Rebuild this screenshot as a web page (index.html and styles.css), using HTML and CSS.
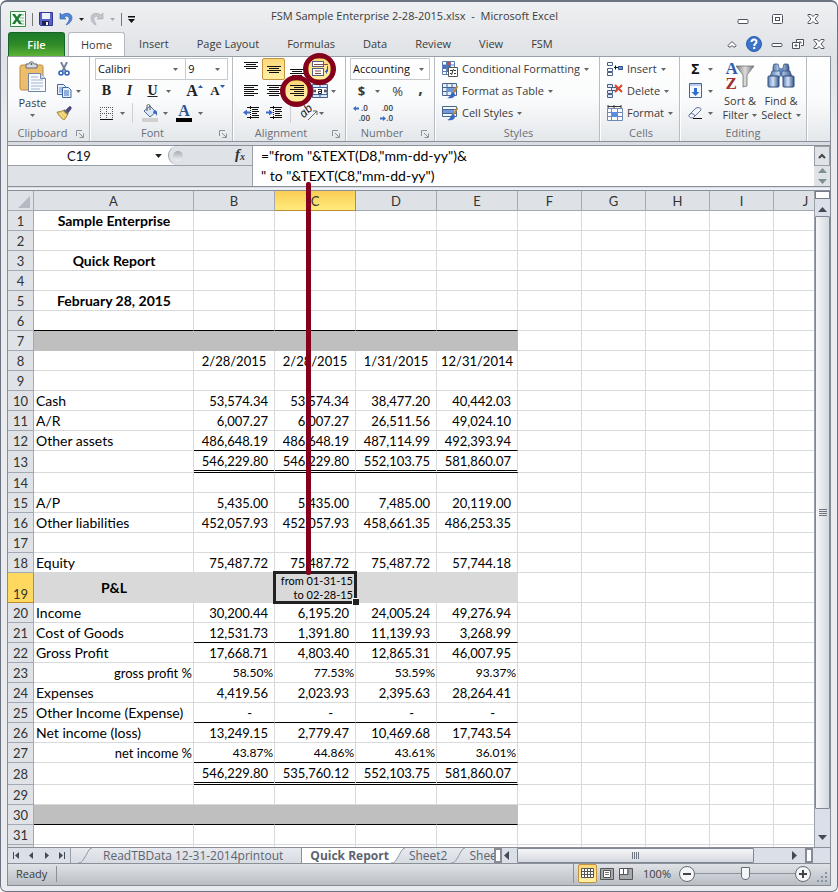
FILE: index.html
```html
<!DOCTYPE html>
<html lang="en">
<head>
<meta charset="utf-8">
<title>FSM Sample Enterprise 2-28-2015.xlsx - Microsoft Excel</title>
<link rel="stylesheet" href="styles.css">
</head>
<body>
<svg class="defs" aria-hidden="true">
  <defs>
    <linearGradient id="steel" x1="0" y1="0" x2="1" y2="0"><stop offset="0" stop-color="#5879ad"/><stop offset=".45" stop-color="#d3e3f8"/><stop offset="1" stop-color="#365588"/></linearGradient>
    <linearGradient id="funnel" x1="0" y1="0" x2="1" y2="0"><stop offset="0" stop-color="#777"/><stop offset=".5" stop-color="#ddd"/><stop offset="1" stop-color="#777"/></linearGradient>
    <symbol id="caret" viewBox="0 0 5 3"><path d="M0 0h5L2.500 3z"/></symbol>
    <symbol id="launch" viewBox="0 0 8 8"><path d="M.5 6V.5H6M3 3l4 4M7.500 3.500v4h-4" fill="none" stroke="#8b9099"/></symbol>
    <symbol id="slant" viewBox="0 0 14 15"><path d="M0 15C4 15 5 12 7 9S11 0 14 0" fill="none" stroke="#8d949d"/></symbol>
  </defs>
</svg>

<div class="window">
  <header class="titlebar">
    <div class="quick">
      <svg width="16" height="16" viewBox="0 0 16 16"><path d="M.5.500h15v15H.5z" fill="#f4fbf4" stroke="#3b8a45"/><path d="M10 4h4M10 7h4M10 10h4M10 13h4" stroke="#7dba83"/><path d="M2 3h3l2 3 2-3h3L8.500 8l3.500 5H9L7 10l-2 3H2l3.500-5z" fill="#1d7a32"/></svg>
      <span class="bar"></span>
      <button aria-label="Save"><svg width="14" height="14" viewBox="0 0 14 14"><path d="M.5.500h13v13h-12l-1-1z" fill="#5a62c8" stroke="#2f3793"/><path d="M3 1h8v6H3z" fill="#eef2fc"/><path d="M3 9h7v4H3z" fill="#1d2357"/><path d="M7 10h2v3H7z" fill="#fff"/></svg></button>
      <button aria-label="Undo"><svg width="14" height="14" viewBox="0 0 14 14"><path d="M1 1v6h6L5 5c3-2 6 0 5 3-.5 2-2 3-3 5 3-1 6-4 6-7 0-5-6-6-10-3z" fill="#4f86d8" stroke="#2c5cab" stroke-width=".6"/></svg></button>
      <svg class="caret dark" width="5" height="3"><use href="#caret"/></svg>
      <button aria-label="Redo"><svg width="14" height="14" viewBox="0 0 14 14"><path d="M13 1v6H7l2-2c-3-2-6 0-5 3 .5 2 2 3 2 5-3-1-5-4-5-7 0-5 6-6 10-3z" fill="#c3c6cb" stroke="#a3a7ae" stroke-width=".6"/></svg></button>
      <svg class="caret pale" width="5" height="3"><use href="#caret"/></svg>
      <span class="bar"></span>
      <svg width="7" height="7" viewBox="0 0 7 7"><path d="M0 0h7v1.500H0zM0 3h7L3.500 7z" fill="#111"/></svg>
    </div>
    <h1>FSM Sample Enterprise 2-28-2015.xlsx&nbsp; -&nbsp; Microsoft Excel</h1>
    <div class="caption">
      <button aria-label="Minimize"><svg width="12" height="12" viewBox="0 0 12 12"><rect x="1" y="6.500" width="10" height="4" rx="1"/></svg></button>
      <button aria-label="Maximize"><svg width="12" height="12" viewBox="0 0 12 12"><rect x=".5" y="1.500" width="10" height="9" rx="1"/><rect x="3.500" y="4.500" width="4" height="3"/></svg></button>
      <button aria-label="Close"><svg width="12" height="12" viewBox="0 0 12 12"><path d="M1 1.500h3l2 2 2-2h3v1L8 6l3 3.500v1H8l-2-2-2 2H1v-1L4 6 1 2.500z"/></svg></button>
    </div>
  </header>

  <nav class="tabs">
    <button class="file">File</button>
    <button class="home">Home</button>
    <button>Insert</button><button>Page Layout</button><button>Formulas</button><button>Data</button><button>Review</button><button>View</button><button>FSM</button>
    <div class="doc-controls">
      <svg width="10" height="8" viewBox="0 0 10 8"><path d="M1 5.500 5 1.500l4 4-1 1.500H6.500L5 5.500 3.500 7H2z"/></svg>
      <svg class="help" width="16" height="16" viewBox="0 0 16 16"><circle cx="8" cy="8" r="7.500" fill="#3c74cc" stroke="#2a5cae"/><path d="M5.500 6c0-3.500 5.500-3 5 0-.3 1.500-2.300 1.700-2.300 4" fill="none" stroke="#fff" stroke-width="2"/><path d="M7.200 11h2v2h-2z" fill="#fff" stroke="none"/></svg>
      <svg width="12" height="12" viewBox="0 0 12 12"><rect x="1" y="5.500" width="10" height="3" rx="1"/></svg>
      <svg width="12" height="12" viewBox="0 0 12 12"><path d="M4.500 4V1.500h7v6H9M.5 4.500h7v6h-7zM3 7h2v1H3zM7 4h2v1.500"/></svg>
      <svg width="12" height="12" viewBox="0 0 12 12"><path d="M1 1.500h3l2 2 2-2h3v1L8 6l3 3.500v1H8l-2-2-2 2H1v-1L4 6 1 2.500z"/></svg>
    </div>
  </nav>

  <main class="client">
    <section class="ribbon">
      <div class="group clipboard">
        <div class="body">
          <button class="big">
            <svg width="28" height="32" viewBox="0 0 28 32"><rect x="1" y="4" width="23" height="25" rx="2" fill="#eebd6b" stroke="#bd8b3e"/><path d="M7 7V3h3c0-3 5-3 5 0h3v4z" fill="#d7dce2" stroke="#646b75"/><circle cx="12.500" cy="3" r="1" fill="#555"/><path d="M9.500 12.500h12l5 5v13h-17z" fill="#f7faff" stroke="#7184a3"/><path d="M21.500 12.500v5h5" fill="#d2ddf0" stroke="#7184a3"/><path d="M12 16h7M12 19h12M12 22h12M12 25h12M12 28h9" stroke="#a5b5cf"/></svg>
            <span>Paste</span>
            <svg class="caret" width="5" height="3"><use href="#caret"/></svg>
          </button>
          <div class="stack">
            <div class="row"><button class="ic" aria-label="Cut"><svg width="12" height="14" viewBox="0 0 12 14"><path d="M3 0 7.500 9M9 0 4.500 9" stroke="#6f7f98" stroke-width="1.800"/><circle cx="3" cy="11" r="2" fill="none" stroke="#2e62b8" stroke-width="1.600"/><circle cx="9" cy="11" r="2" fill="none" stroke="#2e62b8" stroke-width="1.600"/></svg></button></div>
            <div class="row"><button class="ic" aria-label="Copy"><svg width="16" height="16" viewBox="0 0 16 16"><path d="M1.500 1.500h6l2 2v8h-8z" fill="#e8f0fc" stroke="#3e65a8"/><path d="M3 5h4M3 7h4M3 9h4" stroke="#5f88cc"/><path d="M6.500 4.500h6l2.500 2.500v7.500H6.500z" fill="#e8f0fc" stroke="#3e65a8"/><path d="M8 8h5M8 10h5M8 12h5" stroke="#3e6fc0"/></svg></button><svg class="caret" width="5" height="3"><use href="#caret"/></svg></div>
            <div class="row"><button class="ic" aria-label="Format Painter"><svg width="16" height="16" viewBox="0 0 16 16"><path d="m9 6 4-4c1-1 3 0 2 2l-4 5z" fill="#4d4b87" stroke="#2f2c5c" stroke-width=".6"/><path d="M1 7c3 0 5-1 7-2l4 4c-1 2-2 4-4 6-1-1-5-3-7-8z" fill="#e9c764" stroke="#8f7430" stroke-width=".8"/><path d="m8 5 4 4" stroke="#6d6d6d" stroke-width="2"/><path d="m4 8 4 5M6 7l4 4" stroke="#fff0a8"/></svg></button></div>
          </div>
        </div>
        <footer>Clipboard<svg width="8" height="8"><use href="#launch"/></svg></footer>
      </div>

      <div class="group font">
        <div class="body stack">
          <div class="row">
            <label class="combo name"><select aria-label="Font"><option>Calibri</option></select><svg class="caret" width="5" height="3"><use href="#caret"/></svg></label>
            <label class="combo size"><select aria-label="Font size"><option>9</option></select><svg class="caret" width="5" height="3"><use href="#caret"/></svg></label>
          </div>
          <div class="row">
            <button class="ic serif"><b>B</b></button><button class="ic serif"><i>I</i></button><button class="ic serif"><u>U</u></button><svg class="caret" width="5" height="3"><use href="#caret"/></svg>
            <span class="sep"></span>
            <button class="ic serif grow">A<svg width="5" height="3" viewBox="0 0 5 3"><path d="M0 3h5L2.500 0z" fill="#2d5ba8"/></svg></button>
            <button class="ic serif shrink">A<svg width="5" height="3" viewBox="0 0 5 3"><path d="M0 0h5L2.500 3z" fill="#2d5ba8"/></svg></button>
          </div>
          <div class="row">
            <button class="ic" aria-label="Borders"><svg width="13" height="13" viewBox="0 0 13 13"><path d="M.5 0v12M6.500 0v12M12.500 0v12M0 .5h13M0 6.500h13" fill="none" stroke="#555" stroke-dasharray="1 1"/><path d="M0 12.500h13" stroke="#111"/></svg></button><svg class="caret" width="5" height="3"><use href="#caret"/></svg>
            <span class="sep"></span>
            <button class="ic" aria-label="Fill color"><svg width="16" height="18" viewBox="0 0 16 18"><path d="m8 2 6 6-6 5-6-6z" fill="#dce8fa" stroke="#516f9f"/><path d="M5 7V2c0-2 3-2 3 0v4" fill="none" stroke="#555"/><path d="M12 6c4 0 3 4 3 6-1-2-2-3-4-3z" fill="#356ac1"/><path d="M0 14h16v4H0z" fill="#d0d0d0"/></svg></button><svg class="caret" width="5" height="3"><use href="#caret"/></svg>
            <button class="ic serif fcolor">A</button><svg class="caret" width="5" height="3"><use href="#caret"/></svg>
          </div>
        </div>
        <footer>Font<svg width="8" height="8"><use href="#launch"/></svg></footer>
      </div>

      <div class="group align">
        <div class="body stack">
          <div class="row">
            <button class="ic" aria-label="Top align"><svg class="lines" width="14" height="14" viewBox="0 0 14 14"><path d="M0 .5h14M2 2.500h10M0 4.500h14M2 6.500h10"/></svg></button>
            <button class="ic on" aria-label="Middle align"><svg class="lines" width="14" height="14" viewBox="0 0 14 14"><path d="M0 4.500h14M2 6.500h10M0 8.500h14M2 10.500h10"/></svg></button>
            <button class="ic" aria-label="Bottom align"><svg class="lines" width="14" height="14" viewBox="0 0 14 14"><path d="M0 7.500h14M2 9.500h10M0 11.500h14M2 13.500h10"/></svg></button>
            <button class="ic on" aria-label="Wrap text"><svg width="16" height="16" viewBox="0 0 16 16"><rect x=".5" y=".5" width="11" height="5" fill="#fff" stroke="#555c80"/><path d="M2 3.500h14" stroke="#8a4a55"/><rect x=".5" y="7.500" width="11" height="7" fill="#fff" stroke="#555c80"/><path d="M3 10h6M3 12.500h6" stroke="#7b4a4a"/><path d="M15.500 5v5.500H13M14.500 8.500v4" fill="none" stroke="#2d5bb0"/></svg><span class="ring"></span></button>
          </div>
          <div class="row">
            <button class="ic" aria-label="Align left"><svg class="lines" width="14" height="14" viewBox="0 0 14 14"><path d="M0 1.500h14M0 3.500h10M0 5.500h14M0 7.500h10M0 9.500h14M0 11.500h10"/></svg></button>
            <button class="ic" aria-label="Center"><svg class="lines" width="14" height="14" viewBox="0 0 14 14"><path d="M0 1.500h14M2 3.500h10M0 5.500h14M2 7.500h10M0 9.500h14M2 11.500h10"/></svg></button>
            <button class="ic on" aria-label="Align right"><svg class="lines" width="14" height="14" viewBox="0 0 14 14"><path d="M0 1.500h14M4 3.500h10M0 5.500h14M4 7.500h10M0 9.500h14M4 11.500h10"/></svg><span class="ring"></span></button>
            <button class="ic" aria-label="Merge"><svg width="16" height="14" viewBox="0 0 16 14"><path d="M.5.500h15v13H.5zM8 .5V3M8 11v2.500" fill="#dbe7f8" stroke="#49608c"/><path d="M1 3.500h14v7H1z" fill="#fff" stroke="#3f61a5"/><path d="M1 7h3M3 5.500v3M12 7h3M13 5.500v3M6 5.500h3.500v4h-3v-2h3" fill="none" stroke="#222"/></svg></button><svg class="caret" width="5" height="3"><use href="#caret"/></svg>
          </div>
          <div class="row">
            <button class="ic" aria-label="Decrease indent"><svg width="16" height="14" viewBox="0 0 16 14"><path d="M4 1.500h12M9 3.500h6M9 5.500h7M9 7.500h5M9 9.500h7M4 11.500h12" stroke="#111"/><path d="M7.500 0v14" stroke="#111" stroke-dasharray="1 1"/><path d="M0 6.500l4-3v2h3v2H4v2z" fill="#3a6bc9"/></svg></button>
            <button class="ic" aria-label="Increase indent"><svg width="16" height="14" viewBox="0 0 16 14"><path d="M4 1.500h12M9 3.500h6M9 5.500h7M9 7.500h5M9 9.500h7M4 11.500h12" stroke="#111"/><path d="M7.500 0v14" stroke="#111" stroke-dasharray="1 1"/><path d="M7 6.500l-4-3v2H0v2h3v2z" fill="#3a6bc9"/></svg></button>
            <span class="sep"></span>
            <button class="ic orient"><i>ab</i><svg width="14" height="14" viewBox="0 0 14 14"><path d="m3 13 9-9M8 4h4v4" fill="none" stroke="#666"/></svg></button><svg class="caret" width="5" height="3"><use href="#caret"/></svg>
          </div>
        </div>
        <footer>Alignment<svg width="8" height="8"><use href="#launch"/></svg></footer>
      </div>

      <div class="group number">
        <div class="body stack">
          <div class="row"><label class="combo"><select aria-label="Number format"><option>Accounting</option></select><svg class="caret" width="5" height="3"><use href="#caret"/></svg></label></div>
          <div class="row"><button class="ic strong">$</button><svg class="caret" width="5" height="3"><use href="#caret"/></svg><button class="ic pct">%</button><button class="ic comma">,</button></div>
          <div class="row">
            <button class="ic dec"><svg width="6" height="5" viewBox="0 0 6 5"><path d="M0 2.500 3 0v1.500h3v2H3V5z" fill="#3a6bc9"/></svg><span>.0</span><span>.00</span></button>
            <button class="ic dec"><span>.00</span><svg width="6" height="5" viewBox="0 0 6 5"><path d="M6 2.500 3 0v1.500H0v2h3V5z" fill="#3a6bc9"/></svg><span>.0</span></button>
          </div>
        </div>
        <footer>Number<svg width="8" height="8"><use href="#launch"/></svg></footer>
      </div>

      <div class="group styles">
        <div class="body stack">
          <div class="row"><button class="cmd"><svg width="16" height="16" viewBox="0 0 16 16"><path d="M.5.500h12v13H.5zM4.500.500v13M8.500.500v13M.5 4h12M.5 7.500h12M.5 10.500h12" fill="#fff" stroke="#5e7fb5"/><path d="M5 1h3v3H5zM5 8h3v3H5z" fill="#d94242"/><path d="M1 4h3v4H1zM5 4h3v3H5z" fill="#3f72c4"/><path d="M6.500 6.500h9v9h-9z" fill="#fff" stroke="#555"/><path d="M8 9.500h3M11.500 8l-2 6M12 9.500h2M12 12.500h2M8 12.500h1.500" stroke="#333"/></svg>Conditional Formatting<svg class="caret" width="5" height="3"><use href="#caret"/></svg></button></div>
          <div class="row"><button class="cmd"><svg width="16" height="16" viewBox="0 0 16 16"><path d="M.5.500h14v12H.500zM5 .5v12M10 .5v12M.5 4.500h14M.5 8.500h14" fill="#e7effb" stroke="#48648f"/><path d="M5 5h9v4H5z" fill="#6d98dd"/><path d="m15.500 3-5 8" stroke="#c08a35" stroke-width="2"/><path d="M11 9c-2 0-2 5-6 6 4 1 8 0 8-4z" fill="#3468c2"/></svg>Format as Table<svg class="caret" width="5" height="3"><use href="#caret"/></svg></button></div>
          <div class="row"><button class="cmd"><svg width="16" height="16" viewBox="0 0 16 16"><path d="M.5 1.500h14v10H.5zM.5 4.500h14M.5 8.500h14" fill="#f4f8ff" stroke="#48648f"/><path d="M1 5h11v3H1z" fill="#6d98dd"/><path d="m15.500 3-5 8" stroke="#c08a35" stroke-width="2"/><path d="M11 9c-2 0-2 5-6 6 4 1 8 0 8-4z" fill="#3468c2"/></svg>Cell Styles<svg class="caret" width="5" height="3"><use href="#caret"/></svg></button></div>
        </div>
        <footer>Styles</footer>
      </div>

      <div class="group cells">
        <div class="body stack">
          <div class="row"><button class="cmd"><svg width="16" height="16" viewBox="0 0 16 16"><path d="M.5 1.500h5v3h-5zM.5 7.500h5v3h-5zM.5 11.500h5v3h-5z" fill="#fff" stroke="#4a5f86"/><path d="M7 6.500h4M8.500 4.500v4" stroke="#111"/><path d="M11.500 5.500h4v3h-4z" fill="#6d98dd" stroke="#2c4b82"/></svg>Insert<svg class="caret" width="5" height="3"><use href="#caret"/></svg></button></div>
          <div class="row"><button class="cmd"><svg width="16" height="16" viewBox="0 0 16 16"><path d="M.5 1.500h5v3h-5zM.5 7.500h5v3h-5zM.5 11.500h5v3h-5zM4.500 4.500h5v3h-5z" fill="#dfe9f9" stroke="#4a5f86"/><path d="m8 2 7 7M15 2 8 9" stroke="#e04626" stroke-width="2"/></svg>Delete<svg class="caret" width="5" height="3"><use href="#caret"/></svg></button></div>
          <div class="row"><button class="cmd"><svg width="16" height="16" viewBox="0 0 16 16"><path d="M.5 3.500h15v12H.5zM4.500 3.500v12M10.500 3.500v12M.5 7.500h15M.5 11.500h15" fill="#fff" stroke="#7089b5"/><path d="M4 7h7v5H4z" fill="#5b8ee0"/><path d="M1 1.500h13M1 0v3M7 0v3M14 0v3" stroke="#333"/></svg>Format<svg class="caret" width="5" height="3"><use href="#caret"/></svg></button></div>
        </div>
        <footer>Cells</footer>
      </div>

      <div class="group editing">
        <div class="body">
          <div class="stack">
            <div class="row"><button class="ic sigma">Σ</button><svg class="caret" width="5" height="3"><use href="#caret"/></svg></div>
            <div class="row"><button class="ic" aria-label="Fill"><svg width="14" height="16" viewBox="0 0 14 16"><path d="M.5.500h12v14H.5z" fill="#f5f9ff" stroke="#48648f"/><path d="M1 1h11v2H1z" fill="#b9cdee"/><path d="M5 5h3v4h2.500l-4 4-4-4H5z" fill="#2f6bd0"/></svg></button><svg class="caret" width="5" height="3"><use href="#caret"/></svg></div>
            <div class="row"><button class="ic" aria-label="Clear"><svg width="15" height="14" viewBox="0 0 15 14"><path d="m1 9 7-7c2-1 6 0 5 2l-7 7c-2 2-6 0-5-2z" fill="#f4f6fb" stroke="#5e7298"/><path d="M2 8c1-1 5 0 5 2" fill="none" stroke="#5e7298"/><path d="M5 12.500h9" stroke="#111"/></svg></button><svg class="caret" width="5" height="3"><use href="#caret"/></svg></div>
          </div>
          <button class="big sort">
            <span class="az"><b>A</b><b>Z</b><svg width="19" height="23" viewBox="0 0 19 23"><path d="M0 1h18l-7 9v11l-4 1V10z" fill="url(#funnel)" stroke="#666" stroke-width=".7"/></svg></span>
            <span>Sort &amp;</span><span>Filter <svg class="caret" width="5" height="3"><use href="#caret"/></svg></span>
          </button>
          <button class="big find">
            <svg width="28" height="28" viewBox="0 0 28 28"><path d="M7 2h4l1 3v5H6V5zM17 2h4l1 3v5h-6V5z" fill="url(#steel)" stroke="#2e4a7d" stroke-width=".7"/><path d="M12 6h4v8h-4z" fill="#6b8dc6"/><path d="M5 9h8v6H3zM15 9h8l2 6H15z" fill="url(#steel)" stroke="#2e4a7d" stroke-width=".7"/><rect x="1" y="14" width="11" height="11" rx="1" fill="url(#steel)" stroke="#2e4a7d"/><rect x="16" y="14" width="11" height="11" rx="1" fill="url(#steel)" stroke="#2e4a7d"/></svg>
            <span>Find &amp;</span><span>Select <svg class="caret" width="5" height="3"><use href="#caret"/></svg></span>
          </button>
        </div>
        <footer>Editing</footer>
      </div>
    </section>

    <section class="work">
      <div class="formula-bar">
        <div class="name-area">
          <input class="name-box" aria-label="Name box" value="C19">
          <svg class="caret dark" width="7" height="4"><use href="#caret"/></svg>
          <div class="fx"><span class="knob"></span><i>f<sub>x</sub></i></div>
        </div>
        <textarea aria-label="Formula" rows="2" spellcheck="false">="from "&amp;TEXT(D8,"mm-dd-yy")&amp;
" to "&amp;TEXT(C8,"mm-dd-yy")</textarea>
        <div class="expand">
          <button aria-label="Collapse formula bar"><svg width="8" height="6" viewBox="0 0 8 6"><path d="m1 5 3-3 3 3" fill="none" stroke="#444" stroke-width="2"/></svg></button>
          <svg width="9" height="16" viewBox="0 0 9 16"><path d="M0 5h9L4.500 0zM0 11h9l-4.500 5z" fill="#7f9090"/></svg>
        </div>
      </div>

      <div class="sheet">
        <div class="grid">
          <table>
            <colgroup><col class="c-head"><col class="c-a"><col class="c-n"><col class="c-n"><col class="c-n"><col class="c-n"><col class="c-e"><col class="c-e"><col class="c-e"><col class="c-e"><col class="c-e"></colgroup>
            <thead><tr><th class="corner"><svg width="12" height="12" viewBox="0 0 12 12"><path d="M12 0v12H0z" fill="#b4b9c1"/></svg></th><th>A</th><th>B</th><th class="sel">C</th><th>D</th><th>E</th><th>F</th><th>G</th><th>H</th><th>I</th><th>J</th></tr></thead>
            <tbody>
              <tr class="title"><th>1</th><td>Sample Enterprise</td><td></td><td></td><td></td><td></td><td></td><td></td><td></td><td></td><td></td></tr>
              <tr><th>2</th><td></td><td></td><td></td><td></td><td></td><td></td><td></td><td></td><td></td><td></td></tr>
              <tr class="title"><th>3</th><td>Quick Report</td><td></td><td></td><td></td><td></td><td></td><td></td><td></td><td></td><td></td></tr>
              <tr><th>4</th><td></td><td></td><td></td><td></td><td></td><td></td><td></td><td></td><td></td><td></td></tr>
              <tr class="title"><th>5</th><td>February 28, 2015</td><td></td><td></td><td></td><td></td><td></td><td></td><td></td><td></td><td></td></tr>
              <tr class="rule-all"><th>6</th><td></td><td></td><td></td><td></td><td></td><td></td><td></td><td></td><td></td><td></td></tr>
              <tr class="band"><th>7</th><td></td><td></td><td></td><td></td><td></td><td></td><td></td><td></td><td></td><td></td></tr>
              <tr class="dates"><th>8</th><td></td><td>2/28/2015</td><td>2/28/2015</td><td>1/31/2015</td><td>12/31/2014</td><td></td><td></td><td></td><td></td><td></td></tr>
              <tr><th>9</th><td></td><td></td><td></td><td></td><td></td><td></td><td></td><td></td><td></td><td></td></tr>
              <tr><th>10</th><td>Cash</td><td>53,574.34</td><td>53,574.34</td><td>38,477.20</td><td>40,442.03</td><td></td><td></td><td></td><td></td><td></td></tr>
              <tr><th>11</th><td>A/R</td><td>6,007.27</td><td>6,007.27</td><td>26,511.56</td><td>49,024.10</td><td></td><td></td><td></td><td></td><td></td></tr>
              <tr class="rule"><th>12</th><td>Other assets</td><td>486,648.19</td><td>486,648.19</td><td>487,114.99</td><td>492,393.94</td><td></td><td></td><td></td><td></td><td></td></tr>
              <tr class="total"><th>13</th><td></td><td>546,229.80</td><td>546,229.80</td><td>552,103.75</td><td>581,860.07</td><td></td><td></td><td></td><td></td><td></td></tr>
              <tr><th>14</th><td></td><td></td><td></td><td></td><td></td><td></td><td></td><td></td><td></td><td></td></tr>
              <tr><th>15</th><td>A/P</td><td>5,435.00</td><td>5,435.00</td><td>7,485.00</td><td>20,119.00</td><td></td><td></td><td></td><td></td><td></td></tr>
              <tr><th>16</th><td>Other liabilities</td><td>452,057.93</td><td>452,057.93</td><td>458,661.35</td><td>486,253.35</td><td></td><td></td><td></td><td></td><td></td></tr>
              <tr><th>17</th><td></td><td></td><td></td><td></td><td></td><td></td><td></td><td></td><td></td><td></td></tr>
              <tr><th>18</th><td>Equity</td><td>75,487.72</td><td>75,487.72</td><td>75,487.72</td><td>57,744.18</td><td></td><td></td><td></td><td></td><td></td></tr>
              <tr class="band light title"><th class="sel">19</th><td>P&amp;L</td><td></td><td class="active">from 01-31-15<br>to 02-28-15</td><td></td><td></td><td></td><td></td><td></td><td></td><td></td></tr>
              <tr><th>20</th><td>Income</td><td>30,200.44</td><td>6,195.20</td><td>24,005.24</td><td>49,276.94</td><td></td><td></td><td></td><td></td><td></td></tr>
              <tr class="rule"><th>21</th><td>Cost of Goods</td><td>12,531.73</td><td>1,391.80</td><td>11,139.93</td><td>3,268.99</td><td></td><td></td><td></td><td></td><td></td></tr>
              <tr><th>22</th><td>Gross Profit</td><td>17,668.71</td><td>4,803.40</td><td>12,865.31</td><td>46,007.95</td><td></td><td></td><td></td><td></td><td></td></tr>
              <tr class="percent"><th>23</th><td>gross profit %</td><td>58.50%</td><td>77.53%</td><td>53.59%</td><td>93.37%</td><td></td><td></td><td></td><td></td><td></td></tr>
              <tr><th>24</th><td>Expenses</td><td>4,419.56</td><td>2,023.93</td><td>2,395.63</td><td>28,264.41</td><td></td><td></td><td></td><td></td><td></td></tr>
              <tr class="rule dash"><th>25</th><td>Other Income (Expense)</td><td>-</td><td>-</td><td>-</td><td>-</td><td></td><td></td><td></td><td></td><td></td></tr>
              <tr><th>26</th><td>Net income (loss)</td><td>13,249.15</td><td>2,779.47</td><td>10,469.68</td><td>17,743.54</td><td></td><td></td><td></td><td></td><td></td></tr>
              <tr class="rule percent"><th>27</th><td>net income %</td><td>43.87%</td><td>44.86%</td><td>43.61%</td><td>36.01%</td><td></td><td></td><td></td><td></td><td></td></tr>
              <tr class="total"><th>28</th><td></td><td>546,229.80</td><td>535,760.12</td><td>552,103.75</td><td>581,860.07</td><td></td><td></td><td></td><td></td><td></td></tr>
              <tr><th>29</th><td></td><td></td><td></td><td></td><td></td><td></td><td></td><td></td><td></td><td></td></tr>
              <tr class="band rule-all"><th>30</th><td></td><td></td><td></td><td></td><td></td><td></td><td></td><td></td><td></td><td></td></tr>
              <tr><th>31</th><td></td><td></td><td></td><td></td><td></td><td></td><td></td><td></td><td></td><td></td></tr>
              <tr class="cut"><th></th><td></td><td></td><td></td><td></td><td></td><td></td><td></td><td></td><td></td><td></td></tr>
            </tbody>
          </table>
        </div>
        <div class="vscroll">
          <span class="split"></span>
          <svg class="arrow" width="9" height="5"><path d="M0 5h9L4.500 0z"/></svg>
          <div class="thumb"><span class="grip"></span></div>
          <svg class="arrow end" width="9" height="5"><path d="M0 0h9L4.500 5z"/></svg>
        </div>
      </div>
      <span class="pointer-line"></span>
    </section>

    <div class="bottom">
      <div class="nav-buttons">
        <button aria-label="First sheet"><svg width="7" height="7" viewBox="0 0 7 7"><path d="M0 0h1v7H0zM6 0v7L2 3.500z"/></svg></button>
        <button aria-label="Previous sheet"><svg width="7" height="7" viewBox="0 0 7 7"><path d="M5 0v7L1 3.500z"/></svg></button>
        <button aria-label="Next sheet"><svg width="7" height="7" viewBox="0 0 7 7"><path d="M2 0v7l4-3.500z"/></svg></button>
        <button aria-label="Last sheet"><svg width="7" height="7" viewBox="0 0 7 7"><path d="M6 0h1v7H6zM1 0v7l4-3.500z"/></svg></button>
      </div>
      <div class="sheet-tabs">
        <svg width="14" height="15"><use href="#slant"/></svg>
        <button class="t1">ReadTBData 12-31-2014printout</button>
        <button class="current">Quick Report</button>
        <svg width="14" height="15" viewBox="0 0 14 15"><path d="M0 0h14C11 0 9 6 7 9S4 15 0 15z" fill="#fff"/><use href="#slant"/></svg>
        <button>Sheet2</button>
        <svg width="14" height="15"><use href="#slant"/></svg>
        <button class="last">Sheet3</button>
      </div>
      <span class="tab-split"></span>
      <div class="hscroll">
        <svg class="arrow" width="5" height="9"><path d="M5 0v9L0 4.500z"/></svg>
        <div class="thumb"><span class="grip"></span></div>
        <div class="track"></div>
        <svg class="arrow" width="5" height="9"><path d="M0 0v9l5-4.500z"/></svg>
        <span class="tab-split"></span>
      </div>
    </div>

    <footer class="status">
      <span class="ready">Ready</span>
      <div class="views">
        <button class="on" aria-label="Normal"><svg width="13" height="11" viewBox="0 0 13 11"><path d="M.5.500h12v9H.5zM.5 3.500h12M.5 6.500h12M3.500.500v9M6.500.500v9M9.500.500v9" fill="#fff" stroke="#555"/></svg></button>
        <button aria-label="Page layout"><svg width="14" height="12" viewBox="0 0 14 12"><path d="M.5.500h13v11H.5z" fill="#a5aab1" stroke="#555"/><path d="M3.500 2.500h7v7h-7z" fill="#fff" stroke="#555"/><path d="M5 4.500h4M5 6.500h4" stroke="#777"/></svg></button>
        <button aria-label="Page break preview"><svg width="14" height="12" viewBox="0 0 14 12"><path d="M.5.500h13v11H.5z" fill="#a5aab1" stroke="#555"/><path d="M1 1h3v5H1zM5 1h3v5H5z" fill="#fff"/><path d="M1 6.500h8V1M4.500 1v5" fill="none" stroke="#555"/></svg></button>
      </div>
      <label for="zoom">100%</label>
      <button class="round" aria-label="Zoom out"><svg width="16" height="16" viewBox="0 0 16 16"><circle cx="8" cy="8" r="7.500" fill="#f5f6f8" stroke="#666c75"/><path d="M4 8h8" stroke="#444" stroke-width="2"/></svg></button>
      <input id="zoom" type="range" min="0" max="200" value="100">
      <button class="round" aria-label="Zoom in"><svg width="16" height="16" viewBox="0 0 16 16"><circle cx="8" cy="8" r="7.500" fill="#f5f6f8" stroke="#666c75"/><path d="M4 8h8M8 4v8" stroke="#444" stroke-width="2"/></svg></button>
      <svg class="resize" width="12" height="12" viewBox="0 0 12 12"><path d="M9 1h2v2H9zM5 5h2v2H5zM9 5h2v2H9zM1 9h2v2H1zM5 9h2v2H5zM9 9h2v2H9z" fill="#8c939c"/></svg>
    </footer>
  </main>
</div>
</body>
</html>
```
FILE: styles.css
```css
* { box-sizing: border-box; }
body { margin: 0; font: 11px/16px "Open Sans", "Noto Sans", sans-serif; color: #3b3b3b; background: #fff; }
button, input, select, textarea { font: inherit; color: inherit; border: 0; padding: 0; margin: 0; background: none; border-radius: 0; outline: 0; }
svg { display: block; flex: none; }
.defs { position: absolute; width: 0; height: 0; }
.caret { fill: #666; }
.caret.dark { fill: #222; }
.caret.pale { fill: #a5a9af; }

.window { border: 1px solid #6a737f; border-top-width: 2px; border-radius: 7px 7px 6px 6px; padding: 0 6px 5px; background: linear-gradient(#eff0f2, #dfe2e6 54px, #e9ebee 120px); }

/* title bar */
.titlebar { display: grid; grid-template-columns: 1fr auto 1fr; align-items: center; height: 30px; padding: 4px 12px 0 3px; }
.titlebar h1 { margin: 0; font-size: 11px; font-weight: 400; line-height: 16px; padding-bottom: 6px; }
.quick { display: flex; align-items: center; gap: 6px; }
.quick .bar { width: 1px; height: 13px; background: #777; }
.caption { display: flex; justify-content: flex-end; gap: 23px; }
.caption svg, .doc-controls svg { fill: #fff; stroke: #4d5260; }

/* ribbon tabs */
.tabs { display: flex; align-items: stretch; height: 24px; margin-left: 1px; }
.tabs button { padding: 0 14px; height: 24px; }
.tabs .file { width: 57px; padding: 0; color: #fff; font-weight: 600; background: linear-gradient(#1d7a2a, #2f8a28 50%, #5cb336); border: 1px solid #17642a; border-bottom: 0; border-radius: 3px 3px 0 0; margin-right: 3px; }
.tabs .home { background: #fff; border: 1px solid #b6babf; border-bottom: 0; border-radius: 3px 3px 0 0; padding: 0 12px; }
.doc-controls { display: flex; align-items: center; gap: 9px; margin-left: auto; padding-right: 6px; }

/* client area */
.client { border: 1px solid #848c96; border-top-color: #9aa0a8; background: #d9dde3; }
.ribbon { display: flex; height: 85px; background: linear-gradient(#fff, #fafbfc 50%, #e4e7ea); border-bottom: 1px solid #8b9097; }
.group { display: flex; flex-direction: column; flex: none; border-right: 1px solid #b9bdc3; box-shadow: 1px 0 #fff; padding: 1px 4px 0; }
.group footer { position: relative; text-align: center; color: #6a6f79; line-height: 17px; }
.group footer svg { position: absolute; right: 1px; top: 6px; }
.body { display: flex; height: 66px; }
.stack { display: flex; flex-direction: column; }
.row { display: flex; align-items: center; height: 22px; }
.ic { position: relative; display: flex; align-items: center; justify-content: center; width: 23px; height: 22px; flex: none; }
.on { background: linear-gradient(#fbd876, #ffe79a 60%, #fff0a0); border: 1px solid #c5933d; border-radius: 2px; }
.lines { fill: none; stroke: #111; }
.sep { width: 1px; height: 20px; background: #cdd0d5; margin: 0 5px; }
.big { display: flex; flex-direction: column; align-items: center; line-height: 14px; }
.big span { display: flex; align-items: center; gap: 3px; white-space: nowrap; }

.clipboard { width: 82px; }
.clipboard .big { width: 40px; padding: 3px 0 0 1px; }
.clipboard .big span { line-height: 17px; margin: 1px 0 3px; }
.clipboard .row .caret { margin-left: 1px; }
.clipboard footer { padding-right: 12px; }
.font { width: 143px; padding-left: 5px; }
.align { width: 113px; }
.align .body { padding-left: 2px; }
.number { width: 89px; }
.styles { width: 165px; padding-left: 7px; }
.cells { width: 80px; padding-left: 7px; }
.editing { width: 127px; }
.font footer { padding-right: 18px; }
.number footer, .align footer { padding-right: 16px; }

.combo { display: flex; align-items: center; height: 22px; border: 1px solid #c6cacf; background: #fff; padding-right: 5px; color: #111; }
.combo select { appearance: none; flex: 1; width: 0; padding: 0 2px; }
.combo.name { width: 92px; }
.combo.size { width: 42px; border-left: 0; }
.number .combo { width: 80px; }

.serif { font: 700 14px/20px "Liberation Serif", serif; color: #222; }
.grow { font-size: 16px; }
.shrink { font-size: 13px; }
.grow svg, .shrink svg { margin-bottom: 9px; }
.fcolor { font-size: 16px; line-height: 14px; color: #2f5496; height: 18px; border-bottom: 4px solid #000; width: 16px; margin-left: 6px; margin-right: 4px; }
.font .caret { margin: 0 2px; }
.orient { font-size: 12px; color: #111; }
.orient i { transform: rotate(-45deg); padding-bottom: 6px; }
.orient svg { position: absolute; right: 0; bottom: 3px; }
.strong { font-weight: 700; font-size: 13px; }
.pct { font-size: 13px; margin-left: 6px; }
.comma { font-weight: 700; font-size: 16px; padding-bottom: 6px; }
.dec { display: grid; grid-template-columns: auto auto; justify-content: end; align-content: center; font-size: 8px; line-height: 10px; font-weight: 600; padding-right: 3px; }
.dec span:last-child { grid-column: 2; justify-self: end; }
.dec svg { justify-self: end; align-self: center; }
.dec + .dec span:first-child { grid-column: 1 / 3; justify-self: end; }
.dec + .dec svg { grid-column: 1; }
.number .caret { margin-left: 2px; }
.cmd { display: flex; align-items: center; gap: 4px; white-space: nowrap; }
.editing .ic { font-size: 14px; font-weight: 700; color: #111; }
.editing .caret { margin-left: 1px; }
.editing .big { padding-top: 3px; }
.editing .stack { width: 36px; }
.sort { width: 40px; }
.find { width: 42px; }
.editing .big > :first-child { height: 30px; margin-bottom: 3px; }
.editing .big > .az { display: grid; grid-template-columns: 10px 19px; line-height: 15px; font-family: "Liberation Serif", serif; font-size: 17px; gap: 0; color: #2f5ba8; }
.az b { grid-column: 1; }
.az b + b { color: #a33030; }
.az svg { grid-column: 2; grid-row: 1 / 3; }

/* hand-drawn highlights */
.ring { position: absolute; inset: -6px; border: 5px solid #84001c; border-radius: 50%; z-index: 2; }
.pointer-line { position: absolute; left: 298px; top: 40px; width: 5px; height: 393px; background: #84001c; border-radius: 2px; }

/* formula bar */
.work { position: relative; padding-top: 3px; }
.formula-bar { display: flex; height: 42px; border: solid #8b9097; border-width: 1px 0; background: #dfe3e8; }
.name-area { display: flex; align-items: center; width: 244px; height: 20px; background: #fff; border-bottom: 1px solid #9aa0a8; }
.name-box { width: 142px; text-align: center; color: #111; margin-right: 5px; font: 13px/16px Lato, sans-serif; }
.fx { display: flex; align-items: center; justify-content: space-between; flex: 1; height: 19px; margin-left: 6px; padding: 0 7px 0 4px; border-left: 1px solid #9aa0a8; border-radius: 10px 0 0 10px; background: #dfe3e8; font: 700 15px/16px "Liberation Serif", serif; color: #333; }
.fx sub { font-size: 10px; vertical-align: -1px; }
.knob { width: 10px; height: 10px; border-radius: 50%; background: linear-gradient(#a8acb2, #f2f3f5); }
.formula-bar textarea { flex: 1; min-width: 0; resize: none; overflow: hidden; height: 40px; padding: 0 8px; background: #fff; color: #000; font: 14px/20px Lato, sans-serif; border-left: 1px solid #9aa0a8; }
.expand { display: flex; flex-direction: column; align-items: center; gap: 2px; width: 16px; }
.expand button { display: grid; place-items: center; width: 16px; height: 20px; border: 1px solid #9aa0a8; }

/* worksheet */
.sheet { display: flex; margin-top: 3px; border-top: 1px solid #8b9097; box-shadow: 0 -2px #edf0f7; }
.grid { flex: 1; min-width: 0; overflow: hidden; background: #fff; }
table { border-collapse: separate; border-spacing: 0; table-layout: fixed; width: 830px; font: 13px/16px Lato, sans-serif; color: #000; }
.c-head { width: 26px; }
.c-a { width: 160px; }
.c-n { width: 81px; }
.c-e { width: 64px; }
th { font-weight: 400; color: #333; background: #dfe2e7; border: solid #a3a9b2; border-width: 0 1px 1px 0; padding: 0; }
thead th { height: 20px; background: #dee2e7; }
.corner svg { margin: 3px 0 0 10px; }
.sel { background: #ffd95f; border-color: #c08a2e; }
thead .sel { background: linear-gradient(#fbcd55, #ffec7c); }
td { height: 20px; padding: 1px 6px 0 0; border: solid #d8dadc; border-width: 0 1px 1px 0; text-align: right; white-space: nowrap; }
td:nth-child(2) { text-align: left; padding: 1px 1px 0 2px; font-size: 14px; }
.title td:nth-child(2) { text-align: center; font-weight: 700; }
.rule td:nth-child(n+3):nth-child(-n+6), .rule-all td:nth-child(-n+6) { border-bottom-color: #000; }
.total td { height: 22px; }
.total td:nth-child(n+3):nth-child(-n+6) { border-bottom: 3px double #000; }
.band td:nth-child(-n+6) { background: #bfbfbf; border-color: #bfbfbf; }
.band.rule-all td:nth-child(-n+6) { border-bottom-color: #000; }
.band.light td:nth-child(-n+6) { background: #d9d9d9; border-color: #d9d9d9; }
.light td { height: 30px; }
.light th { vertical-align: bottom; }
.dates td:nth-child(n+3) { text-align: center; padding: 1px 0 0; }
.percent td, .percent td:nth-child(2) { font-size: 12px; text-align: right; padding: 1px 1px 0 0; }
.percent td:nth-child(2) { font-size: 13px; }
.dash td:nth-child(n+3) { padding-right: 22px; }
.cut th, .cut td { height: 2px; border-bottom: 0; padding: 0; }
.light .active { position: relative; padding: 0 2px 0 0; font-size: 11px; line-height: 14px; }
.active::before { content: ""; position: absolute; inset: -2px; border: 3px solid #222; }
.active::after { content: ""; position: absolute; right: -4px; bottom: -3px; width: 6px; height: 6px; background: #222; border: solid #fff; border-width: 1px 0 0 1px; }

.vscroll { display: flex; flex-direction: column; align-items: center; width: 16px; background: #dbdfe7; border-left: 1px solid #9aa0a8; }
.split { width: 15px; height: 8px; background: #fff; border: 1px solid #777d86; }
.arrow { fill: #444a52; }
.vscroll .arrow { margin: 8px 0 4px; }
.vscroll .end { margin: 26px 0 7px; }
.thumb { display: grid; place-items: center; border: 1px solid #7f8894; background: linear-gradient(90deg, #f5f6f8, #d5d9df); border-radius: 1px; }
.vscroll .thumb { flex: 1; width: 15px; }
.vscroll .grip { width: 8px; height: 7px; background: repeating-linear-gradient(#6d7580 0 1px, transparent 1px 2px); }

/* sheet tabs */
.bottom { display: flex; height: 17px; background: #dbdfe7; border: solid #8b9097; border-width: 1px 0; }
.bottom button { line-height: 15px; white-space: nowrap; }
.nav-buttons { display: flex; gap: 8px; width: 63px; padding-left: 5px; border-right: 1px solid #9aa0a8; }
.nav-buttons svg { fill: #444a52; }
.sheet-tabs { display: flex; width: 423px; padding-left: 7px; overflow: hidden; color: #5d6370; background: linear-gradient(#e7eaef, #d7dbe2); }
.sheet-tabs button { flex: none; padding: 0 4px; font-size: 12px; }
.sheet-tabs .t1 { padding: 0 18px 0 11px; border-right: 1px solid #8b9097; }
.sheet-tabs .current { background: #fff; font-weight: 700; padding: 0 2px 0 8px; }
.tab-split { flex: none; width: 8px; height: 15px; background: #fff; border: 2px solid #858c96; }
.hscroll { display: flex; align-items: center; flex: 1; gap: 8px; padding: 0 17px 0 2px; }
.hscroll .thumb { flex: 240; height: 15px; background: linear-gradient(#f5f6f8, #d5d9df); }
.hscroll .grip { width: 8px; height: 7px; background: repeating-linear-gradient(90deg, #6d7580 0 1px, transparent 1px 2px); }
.hscroll .track { flex: 22; }

/* status bar */
.status { display: flex; align-items: center; height: 21px; padding: 0 2px 2px 0; background: linear-gradient(#dfe2e6, #b9bec5); }
.ready { width: 49px; padding-left: 8px; border-right: 1px solid #8b9097; }
.views { display: flex; align-items: center; margin-left: auto; border-left: 1px solid #8b9097; padding-left: 4px; }
.views button { display: grid; place-items: center; width: 19px; height: 19px; }
.status label { margin: 0 8px; }
.status input { appearance: none; width: 100px; height: 16px; background: linear-gradient(#8b929c, #8b929c) center / 100% 1px no-repeat; }
.status input::-webkit-slider-thumb { appearance: none; width: 9px; height: 13px; background: #f5f6f8; border: 1px solid #666c75; border-radius: 1px 1px 5px 5px; }
.resize { margin: 7px 0 0 5px; }
```
